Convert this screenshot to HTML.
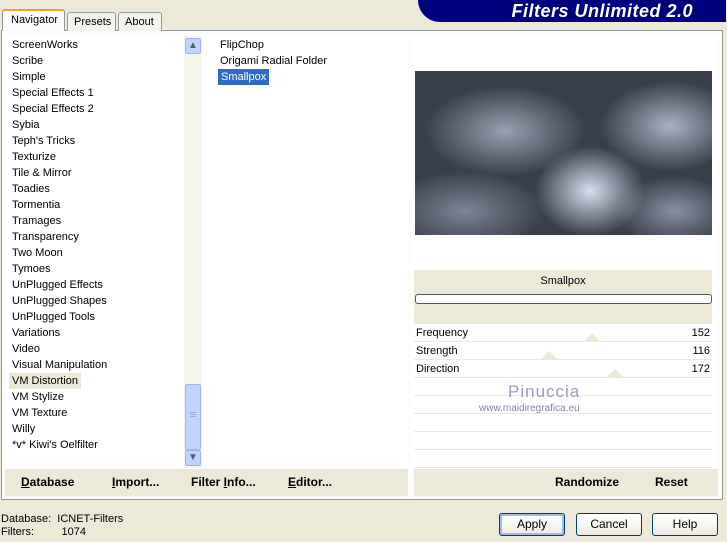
<!DOCTYPE html>
<html><head><style>
*{margin:0;padding:0;box-sizing:border-box}
body{width:727px;height:542px;background:#ECE9D8;font-family:"Liberation Sans",sans-serif;font-size:11px;color:#000;position:relative;overflow:hidden}
.a{position:absolute}
.banner{left:418px;top:0;width:308px;height:22px;background:#00007f;border-bottom-left-radius:22px 22px}
.banner span{position:absolute;right:33px;top:1px;color:#fff;font-weight:bold;font-style:italic;font-size:18px;letter-spacing:.5px}
.tab{top:12px;height:19px;border:1px solid #919b9c;border-bottom:none;background:#f4f3ee;border-radius:3px 3px 0 0;padding:3px 6px 0;font-size:11px}
.panel{left:1px;top:30px;width:722px;height:470px;border:1px solid #919b9c;background:#fcfcfe}
.list{left:5px;top:37px;width:179px;height:431px;background:#fff}
.item{position:absolute;left:7px;height:16px;line-height:16px;white-space:nowrap}
.mid{left:207px;top:37px;width:201px;height:431px;background:#fff}
.right{left:410px;top:36px;width:308px;height:432px;background:#fff}
.bb{font-weight:bold;font-size:12px;top:475px}
.row{left:414px;width:298px;height:17px;background:#fff;border-bottom:1px solid #ECE9D8}
.btn{top:513px;height:23px;border:1px solid #003c74;border-radius:3px;background:linear-gradient(#fff,#ecebe6);text-align:center;line-height:21px;font-size:12px}
</style></head><body>
<div class="a banner"><span>Filters Unlimited 2.0</span></div>
<div class="a panel"></div>
<div class="a" style="left:5px;top:36px;width:403px;height:1px;background:#fff"></div>
<div class="a tab" style="left:2px;top:9px;height:22px;background:#fcfcfe;border-top:2px solid #f0a030;z-index:2;border-bottom:none;padding-left:8px;width:63px">Navigator</div>
<div class="a tab" style="left:67px;width:49px">Presets</div>
<div class="a tab" style="left:118px;width:44px">About</div>
<div class="a list">
<div class="item" style="top:0">ScreenWorks</div>
<div class="item" style="top:16px">Scribe</div>
<div class="item" style="top:32px">Simple</div>
<div class="item" style="top:48px">Special Effects 1</div>
<div class="item" style="top:64px">Special Effects 2</div>
<div class="item" style="top:80px">Sybia</div>
<div class="item" style="top:96px">Teph's Tricks</div>
<div class="item" style="top:112px">Texturize</div>
<div class="item" style="top:128px">Tile &amp; Mirror</div>
<div class="item" style="top:144px">Toadies</div>
<div class="item" style="top:160px">Tormentia</div>
<div class="item" style="top:176px">Tramages</div>
<div class="item" style="top:192px">Transparency</div>
<div class="item" style="top:208px">Two Moon</div>
<div class="item" style="top:224px">Tymoes</div>
<div class="item" style="top:240px">UnPlugged Effects</div>
<div class="item" style="top:256px">UnPlugged Shapes</div>
<div class="item" style="top:272px">UnPlugged Tools</div>
<div class="item" style="top:288px">Variations</div>
<div class="item" style="top:304px">Video</div>
<div class="item" style="top:320px">Visual Manipulation</div>
<div class="item" style="top:336px;background:#ECE9D8;left:4px;padding:0 3px">VM Distortion</div>
<div class="item" style="top:352px">VM Stylize</div>
<div class="item" style="top:368px">VM Texture</div>
<div class="item" style="top:384px">Willy</div>
<div class="item" style="top:400px">*v* Kiwi's Oelfilter</div>
</div>
<div class="a" style="left:184px;top:36px;width:18px;height:432px;background:#f5f5f0"></div>
<div class="a" style="left:185px;top:38px;width:16px;height:16px;background:#c3d3fd;border:1px solid #9eb5f0;border-radius:2px;color:#4d6185;font-size:10px;text-align:center;line-height:14px">&#9650;</div>
<div class="a" style="left:185px;top:384px;width:16px;height:66px;background:#c3d3fd;border:1px solid #9eb5f0;border-radius:2px;color:#8aa0d8;text-align:center;line-height:60px">≡</div>
<div class="a" style="left:185px;top:450px;width:16px;height:16px;background:#c3d3fd;border:1px solid #9eb5f0;border-radius:2px;color:#4d6185;font-size:10px;text-align:center;line-height:14px">&#9660;</div>
<div class="a mid">
<div class="item" style="top:0;left:13px">FlipChop</div>
<div class="item" style="top:16px;left:13px">Origami Radial Folder</div>
<div class="item" style="top:32px;left:11px;background:#316ac5;color:#fff;padding:0 3px">Smallpox</div>
</div>
<div class="a right"></div>
<div class="a" style="left:415px;top:71px;width:297px;height:164px;background:radial-gradient(ellipse 55px 45px at 175px 120px,#d8deee,transparent),radial-gradient(ellipse 80px 45px at 90px 60px,#9aa0b0,transparent),radial-gradient(ellipse 70px 45px at 255px 55px,#aab0c2,transparent),radial-gradient(ellipse 80px 40px at 50px 140px,#7d8494,transparent),radial-gradient(ellipse 60px 35px at 260px 140px,#8a90a2,transparent),#3a3f4c"></div>
<div class="a" style="left:414px;top:270px;width:298px;height:54px;background:#ECE9D8"></div>
<div class="a" style="left:414px;top:275px;width:298px;text-align:center">Smallpox</div>
<div class="a" style="left:415px;top:294px;width:297px;height:10px;border:1px solid #555;border-radius:3px;background:#fff"></div>
<div class="a row" style="top:325px"><span class="a" style="left:2px;top:2px">Frequency</span><span class="a" style="right:2px;top:2px">152</span></div>
<div class="a row" style="top:343px"><span class="a" style="left:2px;top:2px">Strength</span><span class="a" style="right:2px;top:2px">116</span></div>
<div class="a row" style="top:361px"><span class="a" style="left:2px;top:2px">Direction</span><span class="a" style="right:2px;top:2px">172</span></div>
<div class="a" style="left:584px;top:333px;border:8px solid transparent;border-bottom-color:#ECE9D8;border-top:none"></div>
<div class="a" style="left:541px;top:351px;border:8px solid transparent;border-bottom-color:#ECE9D8;border-top:none"></div>
<div class="a" style="left:607px;top:369px;border:8px solid transparent;border-bottom-color:#ECE9D8;border-top:none"></div>
<div class="a row" style="top:379px"></div><div class="a row" style="top:397px"></div><div class="a row" style="top:415px"></div><div class="a row" style="top:433px"></div><div class="a row" style="top:451px"></div>
<div class="a" style="left:508px;top:382px;color:#9a9fc0;font-size:17px;letter-spacing:1px">Pinuccia</div>
<div class="a" style="left:479px;top:403px;color:#8085a0;font-size:10px">www.maidiregrafica.eu</div>
<div class="a" style="left:5px;top:469px;width:403px;height:27px;background:#ECE9D8"></div>
<div class="a" style="left:414px;top:469px;width:304px;height:27px;background:#ECE9D8"></div>
<div class="a bb" style="left:21px"><u>D</u>atabase</div>
<div class="a bb" style="left:112px"><u>I</u>mport...</div>
<div class="a bb" style="left:191px">Filter <u>I</u>nfo...</div>
<div class="a bb" style="left:288px"><u>E</u>ditor...</div>
<div class="a bb" style="left:555px">Randomize</div>
<div class="a bb" style="left:655px">Reset</div>
<div class="a" style="left:1px;top:513px">Database:&nbsp;&nbsp;ICNET-Filters</div>
<div class="a" style="left:1px;top:526px">Filters:&nbsp;&nbsp;&nbsp;&nbsp;&nbsp;&nbsp;&nbsp;&nbsp;&nbsp;1074</div>
<div class="a btn" style="left:499px;width:66px;box-shadow:inset 0 0 0 2px #9dbbf0">Apply</div>
<div class="a btn" style="left:576px;width:66px">Cancel</div>
<div class="a btn" style="left:652px;width:66px">Help</div>
</body></html>
